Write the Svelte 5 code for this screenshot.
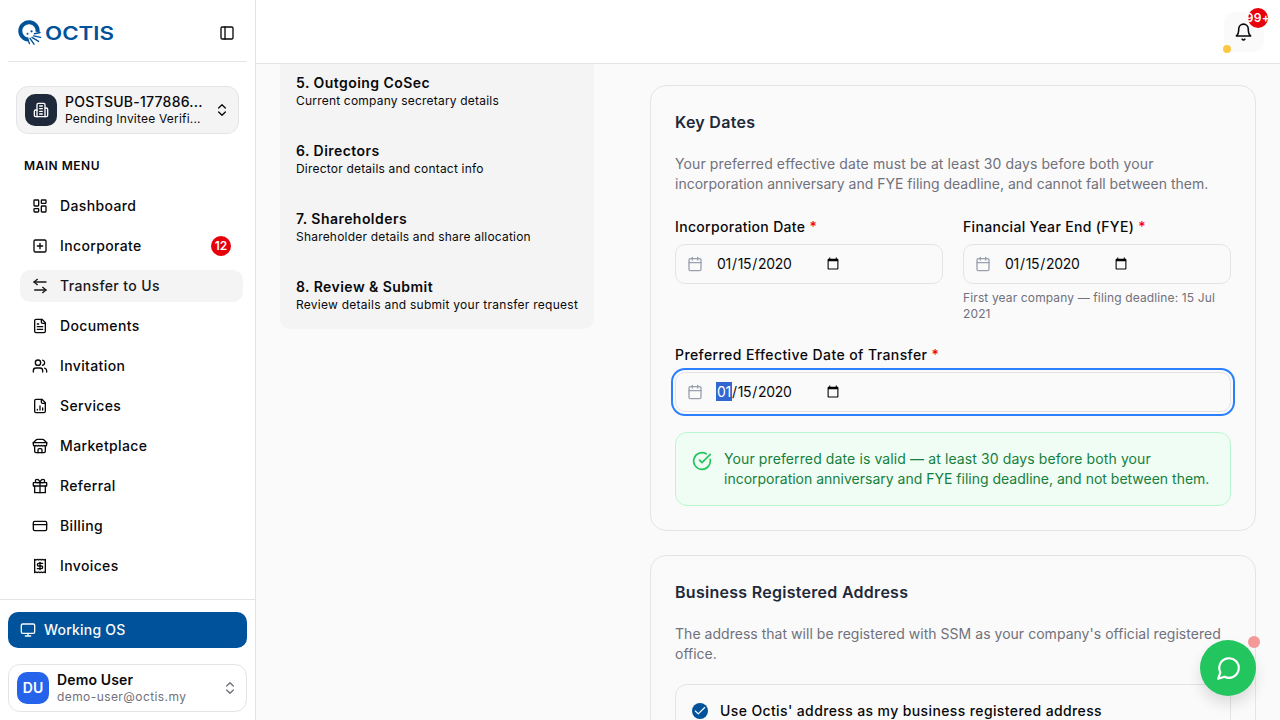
<script>
  import { onMount } from 'svelte';

  let incorporationDate = '2020-01-15';
  let fyeDate = '2020-01-15';
  let transferDate = '2020-01-15';
  let useOctisAddress = true;
  let transferInput;

  const menu = [
    { label: 'Dashboard', icon: 'dashboard' },
    { label: 'Incorporate', icon: 'plus', count: 12 },
    { label: 'Transfer to Us', icon: 'transfer', active: true },
    { label: 'Documents', icon: 'document' },
    { label: 'Invitation', icon: 'users' },
    { label: 'Services', icon: 'chart' },
    { label: 'Marketplace', icon: 'store' },
    { label: 'Referral', icon: 'gift' },
    { label: 'Billing', icon: 'card' },
    { label: 'Invoices', icon: 'receipt' }
  ];

  const steps = [
    { title: '5. Outgoing CoSec', text: 'Current company secretary details' },
    { title: '6. Directors', text: 'Director details and contact info' },
    { title: '7. Shareholders', text: 'Shareholder details and share allocation' },
    { title: '8. Review & Submit', text: 'Review details and submit your transfer request' }
  ];

  const file = ['M15 2H6a2 2 0 0 0-2 2v16a2 2 0 0 0 2 2h12a2 2 0 0 0 2-2V7Z', 'M14 2v4a2 2 0 0 0 2 2h4'];

  const icons = {
    panel: ['M5 3h14a2 2 0 0 1 2 2v14a2 2 0 0 1-2 2H5a2 2 0 0 1-2-2V5a2 2 0 0 1 2-2Z', 'M9 3v18'],
    building: [
      'M6 22V4a2 2 0 0 1 2-2h8a2 2 0 0 1 2 2v18Z',
      'M6 12H4a2 2 0 0 0-2 2v6a2 2 0 0 0 2 2h2',
      'M18 9h2a2 2 0 0 1 2 2v9a2 2 0 0 1-2 2h-2',
      'M10 6h4M10 10h4M10 14h4M10 18h4'
    ],
    updown: ['m7 15 5 5 5-5', 'm7 9 5-5 5 5'],
    dashboard: [
      'M4 3h5a1 1 0 0 1 1 1v7a1 1 0 0 1-1 1H4a1 1 0 0 1-1-1V4a1 1 0 0 1 1-1Z',
      'M15 3h5a1 1 0 0 1 1 1v3a1 1 0 0 1-1 1h-5a1 1 0 0 1-1-1V4a1 1 0 0 1 1-1Z',
      'M15 12h5a1 1 0 0 1 1 1v7a1 1 0 0 1-1 1h-5a1 1 0 0 1-1-1v-7a1 1 0 0 1 1-1Z',
      'M4 16h5a1 1 0 0 1 1 1v3a1 1 0 0 1-1 1H4a1 1 0 0 1-1-1v-3a1 1 0 0 1 1-1Z'
    ],
    plus: ['M5 3h14a2 2 0 0 1 2 2v14a2 2 0 0 1-2 2H5a2 2 0 0 1-2-2V5a2 2 0 0 1 2-2Z', 'M8 12h8M12 8v8'],
    transfer: ['m16 14 5 4-5 4', 'M21 18H4', 'M8 2 3 6l5 4', 'M3 6h18'],
    document: [...file, 'M10 9H8M16 13H8M16 17H8'],
    users: [
      'M16 21v-2a4 4 0 0 0-4-4H6a4 4 0 0 0-4 4v2',
      'M13 7a4 4 0 1 1-8 0 4 4 0 0 1 8 0',
      'M22 21v-2a4 4 0 0 0-3-3.87',
      'M16 3.13a4 4 0 0 1 0 7.75'
    ],
    chart: [...file, 'M8 18v-1M12 18v-6M16 18v-3'],
    store: [
      'm2 7 4.41-4.41A2 2 0 0 1 7.83 2h8.34a2 2 0 0 1 1.42.59L22 7',
      'M4 12v8a2 2 0 0 0 2 2h12a2 2 0 0 0 2-2v-8',
      'M15 22v-4a2 2 0 0 0-2-2h-2a2 2 0 0 0-2 2v4',
      'M2 7h20',
      'M22 7v3a2 2 0 0 1-2 2 2.7 2.7 0 0 1-1.59-.63.7.7 0 0 0-.82 0A2.7 2.7 0 0 1 16 12a2.7 2.7 0 0 1-1.59-.63.7.7 0 0 0-.82 0A2.7 2.7 0 0 1 12 12a2.7 2.7 0 0 1-1.59-.63.7.7 0 0 0-.82 0A2.7 2.7 0 0 1 8 12a2.7 2.7 0 0 1-1.59-.63.7.7 0 0 0-.82 0A2.7 2.7 0 0 1 4 12a2 2 0 0 1-2-2V7'
    ],
    gift: [
      'M20 12v10H4V12',
      'M2 7h20v5H2Z',
      'M12 22V7',
      'M12 7H7.5a2.5 2.5 0 0 1 0-5C11 2 12 7 12 7Z',
      'M12 7h4.5a2.5 2.5 0 0 0 0-5C13 2 12 7 12 7Z'
    ],
    card: ['M4 5h16a2 2 0 0 1 2 2v10a2 2 0 0 1-2 2H4a2 2 0 0 1-2-2V7a2 2 0 0 1 2-2Z', 'M2 10h20'],
    receipt: [
      'M4 2v20l2-1 2 1 2-1 2 1 2-1 2 1 2-1 2 1V2l-2 1-2-1-2 1-2-1-2 1-2-1-2 1Z',
      'M16 8h-6a2 2 0 1 0 0 4h4a2 2 0 1 1 0 4H8',
      'M12 17.5v-11'
    ],
    monitor: ['M4 3h16a2 2 0 0 1 2 2v10a2 2 0 0 1-2 2H4a2 2 0 0 1-2-2V5a2 2 0 0 1 2-2Z', 'M8 21h8M12 17v4'],
    bell: ['M6 8a6 6 0 0 1 12 0c0 7 3 9 3 9H3s3-2 3-9', 'M10.3 21a1.94 1.94 0 0 0 3.4 0'],
    calendar: ['M8 2v4M16 2v4', 'M5 4h14a2 2 0 0 1 2 2v14a2 2 0 0 1-2 2H5a2 2 0 0 1-2-2V6a2 2 0 0 1 2-2Z', 'M3 10h18'],
    valid: ['M21.8 10A10 10 0 1 1 17 3.34', 'm9 11 3 3L22 4'],
    check: ['M4 12l5 5L20 6'],
    chat: ['M7.9 20A9 9 0 1 0 4 16.1L2 22Z']
  };

  onMount(() => {
    transferInput.focus();
  });
</script>

{#snippet icon(name, size = 16)}
  <svg class="icon" width={size} height={size} viewBox="0 0 24 24" aria-hidden="true">
    {#each icons[name] as d}
      <path {d} />
    {/each}
  </svg>
{/snippet}

<div class="app">
  <aside class="sidebar">
    <div class="brand">
      <svg class="logo" width="98" height="28" viewBox="0 0 98 28" role="img" aria-label="Octis">
        <path class="logo-ring" d="M11.3 20.6A8.7 8.7 0 1 1 20.6 13" />
        <circle cx="10.5" cy="14.7" r="1" />
        <circle cx="14.5" cy="12.3" r="1.1" />
        <path
          class="logo-rays"
          d="M17.5 14.8l5.5-1.3M16.6 16.9l7 1.5M15 18.4l6.6 4M13 19.3l4 5.9M11 20.4l1.4 4.2"
        />
        <text x="28" y="20.8" textLength="69" lengthAdjust="spacingAndGlyphs">OCTIS</text>
      </svg>
      <button class="plain" type="button" aria-label="Toggle sidebar">{@render icon('panel')}</button>
    </div>

    <button class="company" type="button">
      <span class="avatar dark">{@render icon('building')}</span>
      <span class="who">
        <span class="company-name">POSTSUB-177886...</span>
        <span class="company-state">Pending Invitee Verifi...</span>
      </span>
      {@render icon('updown')}
    </button>

    <h2 class="menu-title">MAIN MENU</h2>
    <nav>
      {#each menu as item}
        <a href="#top" class="menu-item" class:active={item.active}>
          {@render icon(item.icon)}
          <span>{item.label}</span>
          {#if item.count}
            <span class="count">{item.count}</span>
          {/if}
        </a>
      {/each}
    </nav>

    <footer>
      <button class="working" type="button">{@render icon('monitor')} Working OS</button>
      <button class="user" type="button">
        <span class="avatar blue">DU</span>
        <span class="who">
          <strong>Demo User</strong>
          <span class="email">demo-user@octis.my</span>
        </span>
        {@render icon('updown')}
      </button>
    </footer>
  </aside>

  <div class="page">
    <header>
      <button class="bell" type="button" aria-label="Notifications">
        {@render icon('bell', 20)}
        <span class="bell-count">99+</span>
        <span class="bell-dot"></span>
      </button>
    </header>

    <main>
      <section class="steps">
        {#each steps as step}
          <div class="step">
            <strong>{step.title}</strong>
            <span>{step.text}</span>
          </div>
        {/each}
      </section>

      <div class="cards">
        <section class="card">
          <h3>Key Dates</h3>
          <p class="description dates">
            Your preferred effective date must be at least 30 days before both your incorporation
            anniversary and FYE filing deadline, and cannot fall between them.
          </p>
          <div class="field-row">
            <div class="field">
              <label for="incorporation">Incorporation Date <em>*</em></label>
              <div class="date-box">
                {@render icon('calendar')}
                <input id="incorporation" type="date" bind:value={incorporationDate} />
              </div>
            </div>
            <div class="field">
              <label for="fye">Financial Year End (FYE) <em>*</em></label>
              <div class="date-box">
                {@render icon('calendar')}
                <input id="fye" type="date" bind:value={fyeDate} />
              </div>
              <p class="hint">First year company — filing deadline: 15 Jul 2021</p>
            </div>
          </div>
          <div class="field">
            <label for="transfer">Preferred Effective Date of Transfer <em>*</em></label>
            <div class="date-box focused">
              {@render icon('calendar')}
              <input id="transfer" type="date" bind:value={transferDate} bind:this={transferInput} />
            </div>
          </div>
          <div class="alert">
            {@render icon('valid', 20)}
            <p>
              Your preferred date is valid — at least 30 days before both your incorporation
              anniversary and FYE filing deadline, and not between them.
            </p>
          </div>
        </section>

        <section class="card">
          <h3>Business Registered Address</h3>
          <p class="description address">
            The address that will be registered with SSM as your company's official registered
            office.
          </p>
          <button
            class="option"
            type="button"
            role="checkbox"
            aria-checked={useOctisAddress}
            on:click={() => (useOctisAddress = !useOctisAddress)}
          >
            <span class="tick">
              {#if useOctisAddress}{@render icon('check', 14)}{/if}
            </span>
            Use Octis' address as my business registered address
          </button>
        </section>
      </div>
    </main>
  </div>

  <button class="chat" type="button" aria-label="Chat">
    {@render icon('chat', 26)}
    <span class="chat-dot"></span>
  </button>
</div>

<style>
  :global(body) {
    margin: 0;
    overflow: hidden;
  }

  .app {
    display: flex;
    height: 100vh;
    overflow: hidden;
    background: #fafafa;
    color: #09090b;
    font-family: Inter, 'Liberation Sans', sans-serif;
    font-size: 14px;
    line-height: 20px;
  }

  .app * {
    box-sizing: border-box;
  }

  button,
  input {
    font: inherit;
    letter-spacing: inherit;
    color: inherit;
  }

  button {
    border: 0;
    padding: 0;
    background: none;
    text-align: left;
  }

  h2,
  h3,
  p {
    margin: 0;
  }

  .icon {
    flex: none;
    display: block;
    fill: none;
    stroke: currentColor;
    stroke-width: 2;
    stroke-linecap: round;
    stroke-linejoin: round;
  }

  .sidebar {
    display: flex;
    flex-direction: column;
    flex: none;
    width: 256px;
    background: #fff;
    border-right: 1px solid #e4e4e7;
  }

  .brand {
    display: flex;
    align-items: center;
    justify-content: space-between;
    height: 62px;
    margin: 0 8px;
    padding: 4px 12px 0 9px;
    border-bottom: 1px solid #e4e4e7;
  }

  .logo {
    fill: #00529b;
  }

  .logo-ring,
  .logo-rays {
    fill: none;
    stroke: #00529b;
  }

  .logo-ring {
    stroke-width: 4;
  }

  .logo-rays {
    stroke-width: 1.4;
    stroke-linecap: round;
  }

  .logo text {
    font-size: 19px;
    font-weight: 600;
  }

  .company,
  .user {
    display: flex;
    align-items: center;
    gap: 8px;
    height: 48px;
    padding: 0 8px;
    border: 1px solid #e4e4e7;
    border-radius: 12px;
  }

  .company {
    margin: 24px 16px 0;
    background: #f4f4f5;
  }

  .avatar {
    display: flex;
    align-items: center;
    justify-content: center;
    flex: none;
    width: 32px;
    height: 32px;
    border-radius: 10px;
    color: #fff;
  }

  .dark {
    background: #1e293b;
  }

  .blue {
    background: #2563eb;
    font-weight: 600;
  }

  .who {
    display: flex;
    flex-direction: column;
    flex: 1;
    min-width: 0;
    margin-top: -1px;
    white-space: nowrap;
  }

  .company-name {
    font-weight: 500;
    line-height: 17px;
    letter-spacing: 0.25px;
  }

  .company-state,
  .email {
    font-size: 12px;
    line-height: 17px;
    letter-spacing: 0.2px;
  }

  .who strong {
    font-weight: 600;
    line-height: 17px;
    letter-spacing: 0.15px;
  }

  .email,
  .user :global(.icon) {
    color: #71717a;
  }

  .email {
    letter-spacing: 0.42px;
  }

  .menu-title {
    margin: 22px 24px 14px;
    font-size: 12px;
    font-weight: 600;
    letter-spacing: 0.5px;
  }

  nav {
    display: flex;
    flex-direction: column;
    gap: 8px;
    flex: 1;
    padding: 0 12px 0 20px;
  }

  .menu-item {
    display: flex;
    align-items: center;
    gap: 12px;
    height: 32px;
    padding: 0 12px;
    border-radius: 10px;
    color: inherit;
    font-weight: 500;
    letter-spacing: 0.37px;
    text-decoration: none;
  }

  .active {
    background: #f4f4f5;
    color: #18181b;
  }

  .count {
    width: 20px;
    height: 20px;
    margin-left: auto;
    border-radius: 50%;
    background: #e7000b;
    color: #fff;
    font-size: 12px;
    font-weight: 600;
    text-align: center;
    letter-spacing: 0;
  }

  footer {
    display: flex;
    flex-direction: column;
    gap: 16px;
    padding: 12px 8px 8px;
    border-top: 1px solid #e4e4e7;
  }

  .working {
    display: flex;
    align-items: center;
    gap: 8px;
    height: 36px;
    padding: 0 12px;
    border-radius: 10px;
    background: #00529b;
    color: #fafafa;
    font-weight: 500;
    letter-spacing: 0.2px;
  }

  .page {
    display: flex;
    flex-direction: column;
    flex: 1;
    min-width: 0;
  }

  header {
    display: flex;
    align-items: center;
    justify-content: flex-end;
    flex: none;
    height: 64px;
    padding: 1px 16px 0;
    border-bottom: 1px solid #e4e4e7;
    background: #fff;
  }

  .bell {
    position: relative;
    display: flex;
    align-items: center;
    justify-content: center;
    width: 40px;
    height: 40px;
    border-radius: 10px;
    background: #fafafa;
  }

  .bell :global(.icon) {
    width: 19px;
    height: 20px;
    margin-right: 1px;
  }

  .bell-count {
    position: absolute;
    top: -4px;
    right: -4px;
    display: flex;
    justify-content: center;
    width: 20px;
    height: 20px;
    border-radius: 50%;
    background: #e7000b;
    color: #fff;
    font-size: 12px;
    font-weight: 600;
    letter-spacing: 0.3px;
  }

  .bell-dot {
    position: absolute;
    left: -1px;
    bottom: -1px;
    width: 8px;
    height: 8px;
    border-radius: 50%;
    background: #fcc844;
  }

  main {
    display: flex;
    align-items: flex-start;
    gap: 56px;
    flex: 1;
    min-height: 0;
    padding: 0 24px;
    overflow: hidden;
  }

  .steps {
    display: flex;
    flex-direction: column;
    gap: 32px;
    flex: none;
    width: 314px;
    padding: 9px 0 16px 16px;
    border-radius: 0 0 10px 10px;
    background: #f4f4f5;
    white-space: nowrap;
  }

  .step {
    display: flex;
    flex-direction: column;
  }

  .step strong {
    font-weight: 600;
    letter-spacing: 0.45px;
  }

  .step span {
    font-size: 12px;
    line-height: 16px;
    letter-spacing: 0.2px;
  }

  .step:last-child span {
    letter-spacing: 0.26px;
  }

  .cards {
    display: flex;
    flex-direction: column;
    gap: 24px;
    flex: 1;
    min-width: 0;
    padding-top: 21px;
  }

  .card {
    padding: 24px;
    border: 1px solid #e4e4e7;
    border-radius: 16px;
  }

  h3 {
    color: #1e293b;
    font-size: 16px;
    font-weight: 600;
    line-height: 24px;
    letter-spacing: 0.28px;
  }

  .description {
    margin-top: 20px;
    color: #71717a;
  }

  .dates::first-line,
  .alert p::first-line {
    letter-spacing: 0.11px;
  }

  .address::first-line {
    letter-spacing: 0.03px;
  }

  .field-row {
    display: grid;
    grid-template-columns: 1fr 1fr;
    gap: 20px;
  }

  .field {
    margin-top: 23px;
  }

  label {
    display: block;
    font-weight: 500;
    letter-spacing: 0.32px;
  }

  .card > .field label {
    letter-spacing: 0.41px;
  }

  em {
    color: #f5000b;
    font-style: normal;
  }

  .date-box {
    display: flex;
    align-items: center;
    height: 40px;
    margin-top: 7px;
    padding-left: 11px;
    border: 1px solid #e4e4e7;
    border-radius: 10px;
    color: #99a1af;
  }

  .date-box input {
    width: 126px;
    margin-left: 13px;
    padding: 0;
    border: 0;
    outline: none;
    background: none;
    color: #09090b;
    letter-spacing: -0.3px;
  }

  .focused {
    outline: 2px solid #2b7fff;
    outline-offset: 2px;
  }

  .hint {
    margin-top: 6px;
    color: #71717a;
    font-size: 12px;
    line-height: 16px;
    letter-spacing: 0.13px;
  }

  .alert {
    display: flex;
    gap: 12px;
    margin-top: 20px;
    padding: 16px;
    border: 1px solid #b9f8cf;
    border-radius: 12px;
    background: #f0fdf4;
    color: #15803d;
  }

  .alert :global(.icon) {
    margin-top: 2px;
    color: #22c55e;
  }

  .option {
    display: flex;
    align-items: center;
    gap: 12px;
    width: 100%;
    height: 54px;
    margin-top: 20px;
    padding: 0 16px;
    border: 1px solid #e4e4e7;
    border-radius: 12px;
    font-weight: 500;
    letter-spacing: 0.38px;
  }

  .tick {
    display: flex;
    align-items: center;
    justify-content: center;
    width: 16px;
    height: 16px;
    border-radius: 50%;
    background: #00529b;
    color: #fff;
  }

  .chat {
    position: fixed;
    right: 24px;
    bottom: 24px;
    display: flex;
    align-items: center;
    justify-content: center;
    width: 56px;
    height: 56px;
    border-radius: 50%;
    background: #22c55e;
    color: #fff;
    box-shadow: 0 8px 14px rgba(0, 0, 0, 0.12);
  }

  .chat :global(.icon) {
    margin-left: 1px;
  }

  .chat-dot {
    position: absolute;
    top: -4px;
    right: -4px;
    width: 12px;
    height: 12px;
    border-radius: 50%;
    background: #f59898;
  }
</style>
